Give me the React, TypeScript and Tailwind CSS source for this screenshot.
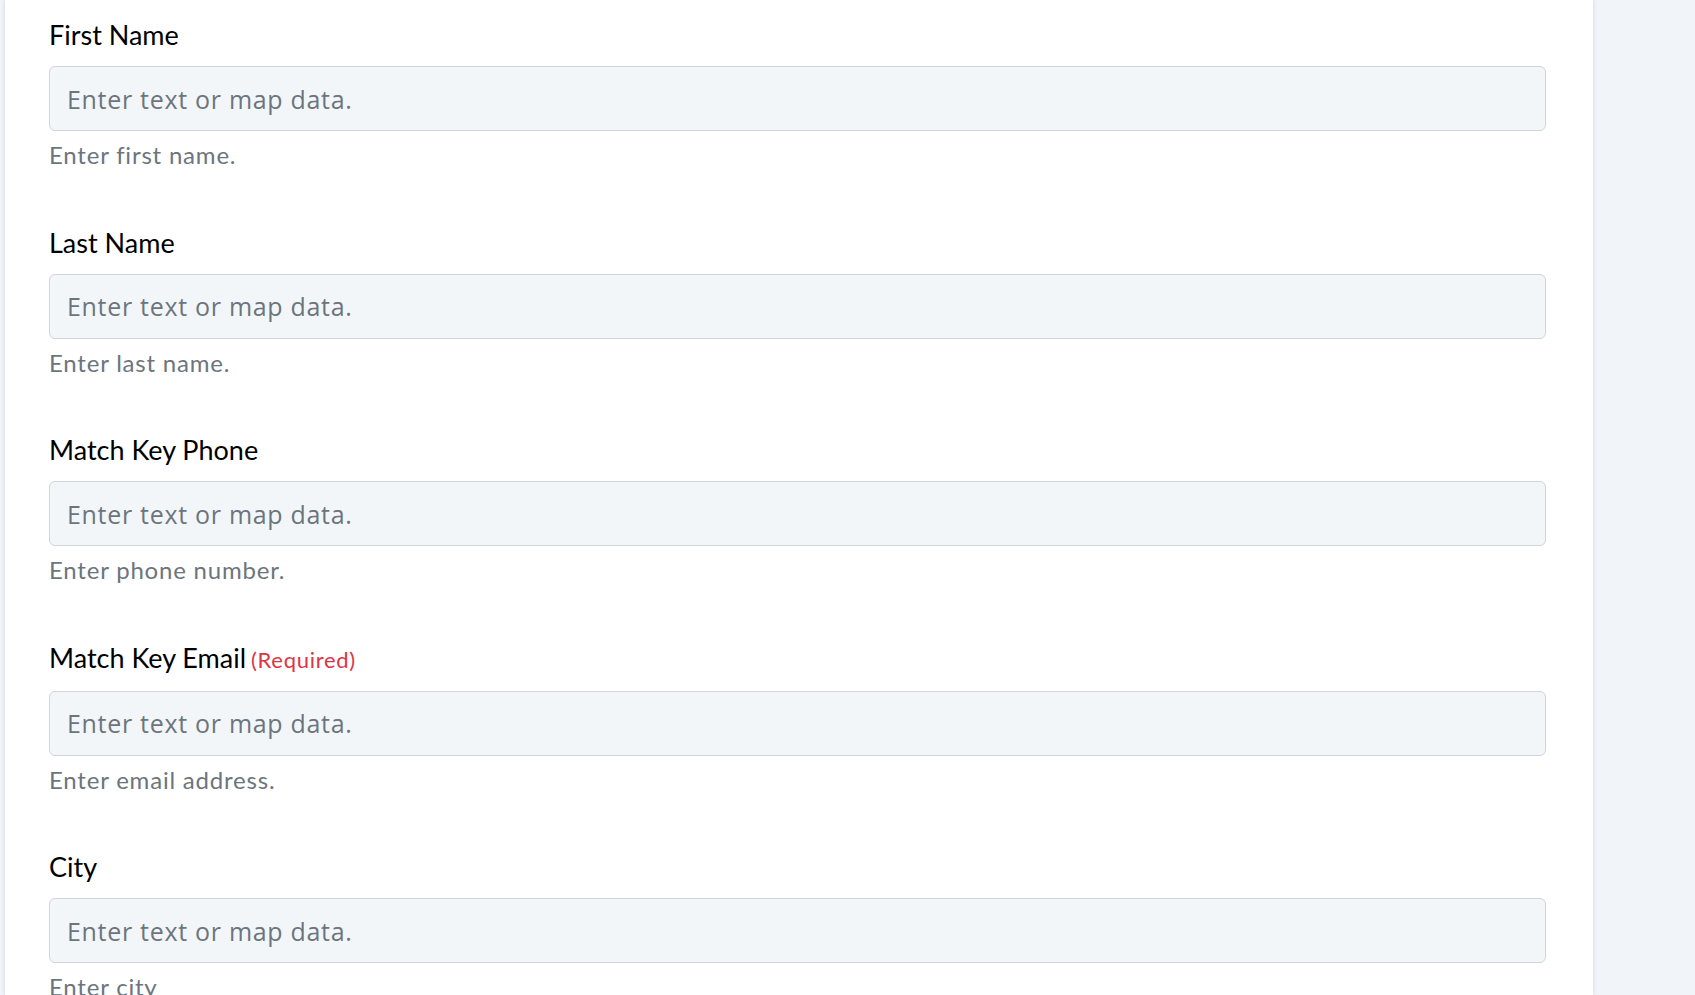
import React from "react";

const fields = [
  { label: "First Name", help: "Enter first name.", required: false },
  { label: "Last Name", help: "Enter last name.", required: false },
  { label: "Match Key Phone", help: "Enter phone number.", required: false },
  { label: "Match Key Email", help: "Enter email address.", required: true },
  { label: "City", help: "Enter city", required: false },
];

export default function App() {
  return (
    <div className="h-screen w-full overflow-hidden bg-[#f1f4f9] flex" style={{ fontFamily: "Lato, 'Noto Sans', sans-serif" }}>
      <div className="ml-[5px] w-[1588px] shrink-0 bg-white shadow-[0_0_4px_rgba(160,170,200,0.45)] pl-[44px] pr-[47px] pt-[18px]">
        {fields.map((f) => (
          <div key={f.label} className="pb-[55.5px]">
            <div className="text-[27px] leading-[34px] text-black mb-[14px] flex items-baseline">
              <span>{f.label}</span>
              {f.required && (
                <span className="ml-[5px] text-[22px] tracking-[0.7px] text-[#dc3545]">(Required)</span>
              )}
            </div>
            <input
              type="text"
              placeholder="Enter text or map data."
              className="block w-full h-[65px] rounded-[6px] border border-[#cfd4dd] bg-[#f3f6f9] pl-[17px] text-[25px] tracking-[0.7px] text-[#333] placeholder:text-[#6c757d] outline-none"
              style={{ fontFamily: "'Open Sans', 'Noto Sans', sans-serif" }}
            />
            <div className="mt-[9px] text-[24px] tracking-[0.8px] leading-[30px] text-[#6c757d]">{f.help}</div>
          </div>
        ))}
      </div>
      <div className="flex-1" />
    </div>
  );
}
